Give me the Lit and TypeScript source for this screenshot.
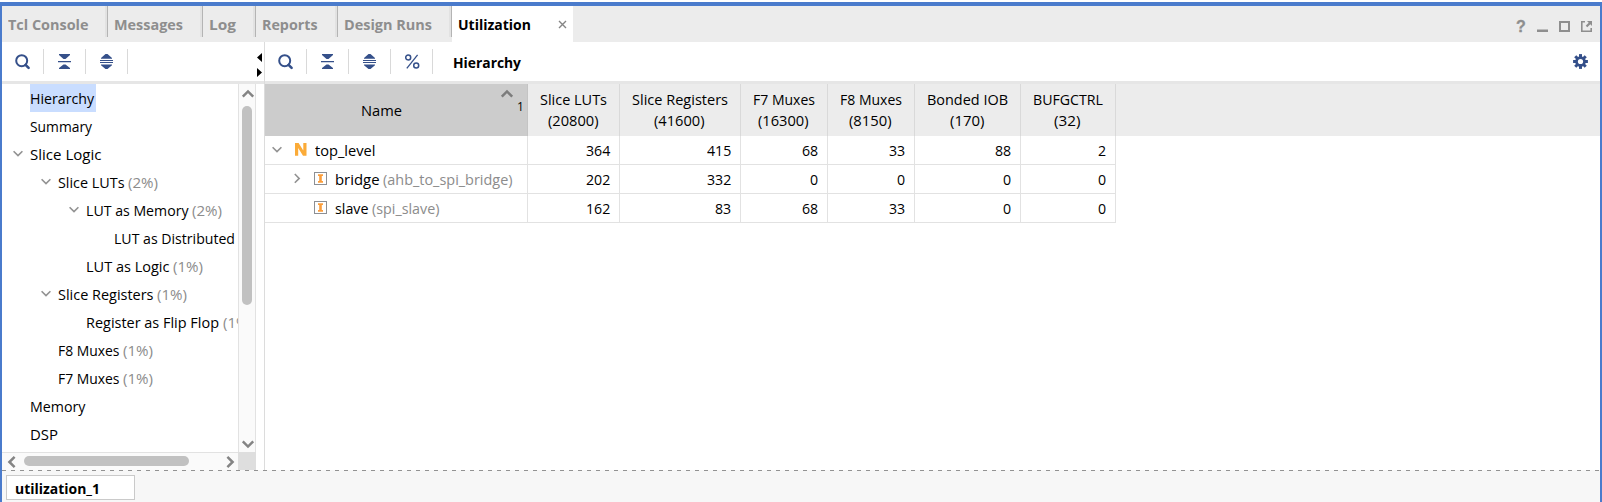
import { LitElement, html, svg, css, nothing } from "lit";
import { customElement, property } from "lit/decorators.js";

/* A text label condensed or widened to a given advance width. */
@customElement("fit-label")
class FitLabel extends LitElement {
  @property() text = "";
  @property({ type: Number }) w = 0;
  static styles = css`
    :host { display: inline-block; white-space: pre; flex: none; }
    .ink { display: inline-block; transform-origin: 0 50%; }
  `;
  updated() {
    const ink = this.renderRoot.querySelector(".ink") as HTMLElement;
    const natural = ink.offsetWidth ? ink.getBoundingClientRect().width : 0;
    if (!natural || ink.style.transform) return;
    this.style.width = `${this.w}px`;
    ink.style.transform = `scaleX(${this.w / natural})`;
  }
  render() {
    return html`<span class="ink">${this.text}</span>`;
  }
}

const label = (text: string, w: number, cls = "") =>
  html`<fit-label class=${cls} .text=${text} .w=${w}></fit-label>`;

const searchIcon = html`<svg class="ico" width="16" height="16" viewBox="0 0 16 16">
  <circle cx="6.7" cy="6.7" r="5.5" fill="none" stroke="#35508a" stroke-width="2" />
  <path d="M10.6 10.8L13.6 13.8" stroke="#35508a" stroke-width="2.6" stroke-linecap="round" />
</svg>`;
const collapseIcon = html`<svg class="ico" width="13" height="16" viewBox="0 0 13 16">
  <path d="M1 0H12V1L7.5 5H5.5L1 1ZM0 7H13V8.3H0ZM5.5 10.5H7.5L12 14V15H1V14Z" fill="#35508a" />
</svg>`;
const expandIcon = html`<svg class="ico" width="13" height="16" viewBox="0 0 13 16">
  <path d="M5.5 0H7.5L12 4V4.7H1V4ZM0 6H13V7H0ZM0 8H13V9H0ZM1 10.5H12V11.3L7.5 15H5.5L1 11.3Z" fill="#35508a" />
</svg>`;
const percentIcon = html`<svg class="ico" width="16" height="16" viewBox="0 0 16 16">
  <g fill="none" stroke="#35508a" stroke-width="1.5">
    <circle cx="3.2" cy="3.6" r="2.5" /><circle cx="11.2" cy="11.6" r="2.5" />
    <path d="M12.6 .8L1.8 14.4" stroke-width="1.3" />
  </g>
</svg>`;
const gearIcon = html`<svg class="gear" width="16" height="16" viewBox="-7.5 -7.5 16 16">
  ${[0, 45, 90, 135].map((a) => svg`<rect x="-1.5" y="-7.4" width="3" height="14.8" fill="#35508a" transform="rotate(${a})" />`)}
  <circle r="5.3" fill="#35508a" /><circle r="2.6" fill="#fff" />
</svg>`;
const chevDown = html`<svg width="11" height="8" viewBox="0 0 11 8"><path d="M.6 1.2L5 5.6L9.4 1.2" fill="none" stroke="#929292" stroke-width="1.6" /></svg>`;
const chevRight = html`<svg width="8" height="11" viewBox="0 0 8 11"><path d="M.8 1L5.2 5.4L.8 9.8" fill="none" stroke="#929292" stroke-width="1.6" /></svg>`;
const arrow = (dir: number, color = "#848484") => html`<svg class="arr" width="14" height="14" viewBox="-7 -7 14 14">
  <path d="M-5.2 2.6L0 -2.6L5.2 2.6" fill="none" stroke=${color} stroke-width="2.5" transform="rotate(${dir})" />
</svg>`;
const netIcon = html`<svg width="12" height="13" viewBox="0 0 12 13"><path d="M0 0H3.6L8.3 7.5V0H11.5V12.7H8L3.2 5V12.7H0Z" fill="#fbab38" /></svg>`;
const instIcon = html`<svg width="13" height="13" viewBox="0 0 13 13">
  <rect x=".5" y=".5" width="12" height="12" fill="#fff" stroke="#8c8f94" />
  <path d="M4 2.3H9V4H7.8V9H9V10.7H4V9H5.2V4H4Z" fill="#fb9e3c" />
</svg>`;

const tabs: [string, number, number][] = [
  ["Tcl Console", 80.5, 106],
  ["Messages", 69, 95],
  ["Log", 27, 53],
  ["Reports", 55.5, 82],
  ["Design Runs", 88, 114],
];

interface Node { d: number; t: string; w: number; pct?: string; open?: boolean; sel?: boolean }
const tree: Node[] = [
  { d: 0, t: "Hierarchy", w: 64, sel: true },
  { d: 0, t: "Summary", w: 62 },
  { d: 0, t: "Slice Logic", w: 71.5, open: true },
  { d: 1, t: "Slice LUTs", w: 66.5, pct: "(2%)", open: true },
  { d: 2, t: "LUT as Memory", w: 102.5, pct: "(2%)", open: true },
  { d: 3, t: "LUT as Distributed", w: 121 },
  { d: 2, t: "LUT as Logic", w: 83.5, pct: "(1%)" },
  { d: 1, t: "Slice Registers", w: 95.5, pct: "(1%)", open: true },
  { d: 2, t: "Register as Flip Flop", w: 133, pct: "(1%)" },
  { d: 1, t: "F8 Muxes", w: 61.5, pct: "(1%)" },
  { d: 1, t: "F7 Muxes", w: 61.5, pct: "(1%)" },
  { d: 0, t: "Memory", w: 55.5 },
  { d: 0, t: "DSP", w: 28 },
];

const cols: [string, number, string, number][] = [
  ["Slice LUTs", 67, "(20800)", 50.5],
  ["Slice Registers", 96, "(41600)", 50.5],
  ["F7 Muxes", 62, "(16300)", 50.5],
  ["F8 Muxes", 62, "(8150)", 42.5],
  ["Bonded IOB", 81, "(170)", 34.5],
  ["BUFGCTRL", 70, "(32)", 26.5],
];
const rows = [
  { d: 0, t: "top_level", w: 60.5, sub: "", sw: 0, v: [364, 415, 68, 33, 88, 2] },
  { d: 1, t: "bridge", w: 44.5, sub: "(ahb_to_spi_bridge)", sw: 129.5, v: [202, 332, 0, 0, 0, 0] },
  { d: 2, t: "slave", w: 33.5, sub: "(spi_slave)", sw: 67.5, v: [162, 83, 68, 33, 0, 0] },
];

@customElement("app-root")
class AppRoot extends LitElement {
  static styles = css`
    :host { display: block; width: 1602px; height: 502px; background: #fff; overflow: hidden;
      font: 14.7px/20px "Open Sans", "Noto Sans", sans-serif; color: #000; }
    * { box-sizing: border-box; }
    svg { display: block; flex: none; }
    .frame { height: 500px; margin-top: 2px; border: solid #4a7bcc; border-width: 4px 2px 0; display: flex; flex-direction: column; }
    .tabs { height: 36px; flex: none; background: #ececec; display: flex; font-weight: 700; color: #8e8e8e; }
    .tab { height: 31px; border-right: 1px solid #b4b4b4; box-shadow: inset -2px 0 #e2e2e2; padding: 8px 0 0 6px; }
    .active { width: 121px; background: #fff; color: #000; display: flex; padding: 8px 6px 0 6px; justify-content: space-between; }
    .close { margin-top: 6px; }
    .win { margin-left: auto; display: flex; gap: 11px; padding: 15px 8px 0 0; }
    .q { font: 700 16px/14px "Liberation Sans", sans-serif; width: 10px; margin-top: -1px; -webkit-text-stroke: .3px #8e8e8e; }
    .main { flex: none; height: 428px; display: flex; }
    .left { width: 254px; flex: none; display: flex; flex-direction: column; }
    .bar { height: 39px; flex: none; display: flex; padding-top: 7px; }
    .tool { width: 42px; height: 25px; border-right: 1px solid #d9d9d9; display: flex; padding: 5px 0 0 14px; }
    .tool.first { padding-left: 13px; }
    .body { display: grid; grid-template: 368px 18px / 236px 18px; border-top: 3px solid #e6e6e6; }
    .nodes { overflow: hidden; }
    .node { height: 28px; display: flex; align-items: center; white-space: nowrap; }
    .d0 { padding-left: 11px; } .d1 { padding-left: 39px; } .d2 { padding-left: 67px; } .d3 { padding-left: 95px; }
    .twist { width: 17px; flex: none; }
    .cap { height: 28px; display: flex; align-items: center; padding-bottom: 1px; }
    .cap.sel { background: #c9ddff; width: 66px; }
    .pct { color: #8c8c8c; margin-left: 3.5px; }
    .vs { border: solid #e2e2e2; border-width: 0 1px; background: #fafafa; display: flex; flex-direction: column; align-items: center; justify-content: space-between; padding: 3px 0 1px 1px; }
    .vthumb { width: 10px; height: 199px; margin: 5px 3px auto 0; border-radius: 5px; background: #c1c1c1; }
    .vs .vthumb { margin-right: 1px; }
    .hs { border-top: 1px solid #e2e2e2; background: #fafafa; display: flex; align-items: center; padding: 0 1px 0 3px; }
    .hthumb { width: 165px; height: 10px; margin: 0 auto 2px 5px; border-radius: 5px; background: #c1c1c1; }
    .corner { background: #dedede; }
    .split { width: 8px; flex: none; padding: 11px 0 0 1px; background: linear-gradient(#e6e6e6, #e6e6e6) 0 39px / 8px 3px no-repeat; }
    .right { flex: 1; border-left: 1px solid #dcdcdc; }
    .title { font-weight: 700; margin: 3px 0 0 20px; }
    .gear { margin: 5px 11px 0 auto; }
    .head { height: 55px; border-top: 3px solid #e6e6e6; background: #ececec; }
    .grid { display: grid; grid-template-columns: 263px 92px 121px 87px 87px 106px 95px; width: 851px; }
    .hname { background: #ccc; display: grid; grid-template-columns: 226px 16px auto; border-right: 1px solid #c4c4c4; }
    .hname .nm { padding: 16px 0 0 96px; }
    .hname .arr { margin: 3px 0 0 9px; width: 14px; }
    .one { font-size: 12px; line-height: 14px; padding: 16px 0 0 10px; }
    .hc { height: 52px; border-right: 1px solid #d9d9d9; display: flex; flex-direction: column; align-items: center; padding: 5px 1px 0 0; line-height: 21px; }
    .row > * { border: solid #e2e2e2; border-width: 0 1px 1px 0; height: 29px; display: flex; align-items: center; padding-bottom: 1px; }
    .num { justify-content: flex-end; padding-right: 9px; }
    .r0 { padding-left: 7px; } .r1 { padding-left: 29px; } .r2 { padding-left: 37px; }
    .cap2 { margin-left: 8px; }
    .ni { margin-left: 12px; }
    .foot { flex: 1; background: #f7f7f7; }
    .dash { height: 1px; background: repeating-linear-gradient(90deg, #929292 0 4px, #f7f7f7 4px 9px); }
    .res { width: 129px; height: 25px; margin: 4px 0 0 4px; border: 1px solid #cacaca; background: #fff; font-weight: 700; padding: 2px 0 0 8px; }
  `;

  render() {
    return html`<div class="frame">
      <div class="tabs">
        ${tabs.map(([t, w, tw]) => html`<div class="tab" style="width:${tw}px">${label(t, w)}</div>`)}
        <div class="active">${label("Utilization", 73)}
          <svg class="close" width="9" height="9" viewBox="0 0 9 9"><path d="M1 1L8 8M8 1L1 8" stroke="#858585" stroke-width="1.4" /></svg>
        </div>
        <div class="win">
          <span class="q">?</span>
          <svg width="11" height="11"><path d="M0 8.5H11V11H0Z" fill="#8e8e8e" /></svg>
          <svg width="11" height="11"><rect x="1" y="1" width="9" height="9" fill="none" stroke="#8e8e8e" stroke-width="2" /></svg>
          <svg width="11" height="11"><path d="M4 .8H.8V10.2H10.2V7" fill="none" stroke="#8e8e8e" stroke-width="1.6" /><path d="M6 0H11V5L9.3 3.3L6.3 6.3L4.7 4.7L7.7 1.7Z" fill="#8e8e8e" /></svg>
        </div>
      </div>
      <div class="main">
        <div class="left">
          <div class="bar">
            <div class="tool first">${searchIcon}</div><div class="tool">${collapseIcon}</div><div class="tool">${expandIcon}</div>
          </div>
          <div class="body">
            <div class="nodes">
              ${tree.map((n) => html`<div class="node d${n.d}"><span class="twist">${n.open ? chevDown : nothing}</span><span class="cap ${n.sel ? "sel" : ""}">${label(n.t, n.w)}${n.pct ? label(n.pct, 30, "pct") : nothing}</span></div>`)}
            </div>
            <div class="vs">${arrow(0)}<div class="vthumb"></div>${arrow(180)}</div>
            <div class="hs">${arrow(-90)}<div class="hthumb"></div>${arrow(90)}</div>
            <div class="corner"></div>
          </div>
        </div>
        <div class="split">
          <svg width="6" height="26"><path d="M5 0V9L0 4.5ZM0 15V24L5 19.5Z" fill="#000" /></svg>
        </div>
        <div class="right">
          <div class="bar">
            <div class="tool first">${searchIcon}</div><div class="tool">${collapseIcon}</div><div class="tool">${expandIcon}</div><div class="tool">${percentIcon}</div>
            <div class="title">${label("Hierarchy", 68)}</div>${gearIcon}
          </div>
          <div class="head"><div class="grid">
            <div class="hname"><div class="nm">${label("Name", 41)}</div>${arrow(0, "#7c7c7c")}<div class="one">1</div></div>
            ${cols.map(([a, aw, b, bw]) => html`<div class="hc">${label(a, aw)}${label(b, bw)}</div>`)}
          </div></div>
          ${rows.map((r) => html`<div class="grid row">
            <div class="r${r.d}">
              ${r.d === 0 ? chevDown : r.d === 1 ? chevRight : nothing}
              <span class="ni">${r.d === 0 ? netIcon : instIcon}</span>
              <span class="cap2">${label(r.t, r.w)}</span>
              ${r.sub ? label(r.sub, r.sw, "pct") : nothing}
            </div>
            ${r.v.map((v) => html`<div class="num">${label(String(v), String(v).length * 8.1)}</div>`)}
          </div>`)}
        </div>
      </div>
      <div class="foot"><div class="dash"></div><div class="res">${label("utilization_1", 85)}</div></div>
    </div>`;
  }
}
